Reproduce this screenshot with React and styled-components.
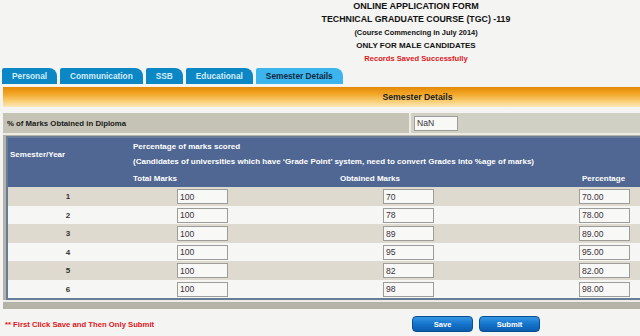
import styled, { createGlobalStyle } from "styled-components";

const sans = `"Liberation Sans", Arial, sans-serif`;

const GlobalStyle = createGlobalStyle`
  html, body {
    margin: 0;
    padding: 0;
    background: #f4f4f2;
    overflow: hidden;
  }
  body {
    font-family: ${sans};
  }
`;

const rows = [
  { sem: 1, total: "100", got: "70", pct: "70.00" },
  { sem: 2, total: "100", got: "78", pct: "78.00" },
  { sem: 3, total: "100", got: "89", pct: "89.00" },
  { sem: 4, total: "100", got: "95", pct: "95.00" },
  { sem: 5, total: "100", got: "82", pct: "82.00" },
  { sem: 6, total: "100", got: "98", pct: "98.00" },
];

const tabs = ["Personal", "Communication", "SSB", "Educational", "Semester Details"];

function App() {
  return (
    <Page>
      <GlobalStyle />
      <Header>
        <HeadLine $size={9}>ONLINE APPLICATION FORM</HeadLine>
        <HeadLine $size={8.8}>TECHNICAL GRADUATE COURSE (TGC) -119</HeadLine>
        <HeadLine $size={7.4}>(Course Commencing in July 2014)</HeadLine>
        <HeadLine $size={8}>ONLY FOR MALE CANDIDATES</HeadLine>
        <HeadLine $size={7.6} $red>
          Records Saved Successfully
        </HeadLine>
      </Header>

      <TabBar>
        {tabs.map((t) => (
          <Tab key={t} $active={t === "Semester Details"}>
            {t}
          </Tab>
        ))}
      </TabBar>

      <Banner>Semester Details</Banner>

      <Frame>
        <DiplomaRow>
          <LabelCell>% of Marks Obtained in Diploma</LabelCell>
          <ValueCell>
            <Field $w={44} readOnly defaultValue="NaN" />
          </ValueCell>
        </DiplomaRow>

        <TableArea>
          <MarksTable>
            <HeadTop>
              <HeadCell>Semester/Year</HeadCell>
              <HeadNote>
                <span>Percentage of marks scored</span>
                <span>
                  (Candidates of universities which have ‘Grade Point’ system,
                  need to convert Grades into %age of marks)
                </span>
              </HeadNote>
            </HeadTop>
            <HeadSub>
              <span />
              <HeadLabel>Total Marks</HeadLabel>
              <HeadLabel>Obtained Marks</HeadLabel>
              <HeadLabel>Percentage</HeadLabel>
            </HeadSub>
            {rows.map((r, i) => (
              <BodyRow key={r.sem} $alt={i % 2 === 1}>
                <SemCell>{r.sem}</SemCell>
                <InputCell $pad={49}>
                  <Field readOnly defaultValue={r.total} />
                </InputCell>
                <InputCell $pad={48}>
                  <Field readOnly defaultValue={r.got} />
                </InputCell>
                <InputCell $pad={2}>
                  <Field readOnly defaultValue={r.pct} />
                </InputCell>
              </BodyRow>
            ))}
          </MarksTable>
        </TableArea>

        <BottomBar />
      </Frame>

      <Footer>
        <Note>** First Click Save and Then Only Submit</Note>
        <ButtonGroup>
          <Button>Save</Button>
          <Button>Submit</Button>
        </ButtonGroup>
      </Footer>
    </Page>
  );
}

export default App;

const Page = styled.div`
  width: 832px;
  color: #111;
`;

const Header = styled.div`
  display: flex;
  flex-direction: column;
  align-items: center;
`;

const HeadLine = styled.div`
  font-size: ${(p) => p.$size}px;
  font-weight: bold;
  line-height: 13px;
  color: ${(p) => (p.$red ? "#e0141b" : "#111")};
`;

const TabBar = styled.div`
  display: flex;
  gap: 3px;
  margin-top: 3px;
  padding-left: 2px;
`;

const Tab = styled.div`
  height: 16px;
  padding: 0 10px;
  display: flex;
  align-items: center;
  font-size: 8.3px;
  font-weight: bold;
  border-radius: 2px 8px 0 0;
  background: ${(p) => (p.$active ? "#3cb5ee" : "#0b87c5")};
  color: ${(p) => (p.$active ? "#10283c" : "#d4ecf8")};
`;

const Banner = styled.div`
  margin: 3px 0 0 3px;
  height: 20px;
  display: flex;
  align-items: center;
  justify-content: center;
  font-size: 8.7px;
  font-weight: bold;
  color: #222;
  background: linear-gradient(#e48906 0%, #f2a627 35%, #f8cd72 70%, #fce8b8 100%);
`;

const Frame = styled.div`
  margin: 6px 0 0 3px;
  display: flex;
  flex-direction: column;
  gap: 2px;
  background: #ecebe4;
`;

const DiplomaRow = styled.div`
  display: grid;
  grid-template-columns: 406px 1fr;
  gap: 2px;
  height: 20px;
`;

const LabelCell = styled.div`
  display: flex;
  align-items: center;
  padding-left: 4px;
  background: #c5c3b5;
  font-size: 7.8px;
  font-weight: bold;
  color: #1a1a1a;
`;

const ValueCell = styled.div`
  display: flex;
  align-items: center;
  padding-left: 3px;
  background: #d1d0c4;
`;

const Field = styled.input`
  box-sizing: border-box;
  width: ${(p) => p.$w || 51}px;
  height: 15px;
  padding: 0 2px;
  border: 1px solid #9c9c98;
  background: #f8f8f6;
  font-family: ${sans};
  font-size: 8.6px;
  color: #3a3238;
  outline: none;
`;

const TableArea = styled.div`
  background: #b5b3a7;
  padding: 1px 0 0 3px;
`;

const MarksTable = styled.div`
  border: 2px solid #687d98;
  border-right: none;
`;

const HeadTop = styled.div`
  display: grid;
  grid-template-columns: 120px 1fr;
  height: 32px;
  background: #4f6792;
  color: #fff;
  font-size: 8px;
  font-weight: bold;
`;

const HeadCell = styled.div`
  display: flex;
  align-items: center;
  padding-left: 2px;
  padding-top: 1px;
`;

const HeadNote = styled.div`
  display: flex;
  flex-direction: column;
  justify-content: center;
  gap: 6px;
  padding-left: 5px;
`;

const HeadSub = styled.div`
  display: grid;
  grid-template-columns: 120px 207px 242px 1fr;
  height: 17px;
  align-items: center;
  background: #4f6792;
  color: #fff;
  font-size: 8px;
  font-weight: bold;
`;

const HeadLabel = styled.div`
  padding-left: 5px;
`;

const BodyRow = styled.div`
  display: grid;
  grid-template-columns: 120px 207px 242px 1fr;
  align-items: center;
  height: ${(p) => (p.$alt ? 18 : 19)}px;
  background: ${(p) => (p.$alt ? "#f6f6f4" : "#dedad0")};
`;

const SemCell = styled.div`
  text-align: center;
  font-size: 8px;
  font-weight: bold;
  color: #333;
`;

const InputCell = styled.div`
  display: flex;
  padding-left: ${(p) => p.$pad}px;
`;

const BottomBar = styled.div`
  height: 7px;
  background: #b5b3a7;
`;

const Footer = styled.div`
  display: grid;
  grid-template-columns: 412px auto;
  align-items: center;
  padding-top: 7px;
`;

const Note = styled.div`
  padding-left: 5px;
  font-size: 7.7px;
  font-weight: bold;
  color: #e0141b;
`;

const ButtonGroup = styled.div`
  display: flex;
  gap: 6px;
`;

const Button = styled.button`
  width: 61px;
  height: 16px;
  padding: 0;
  border: 1px solid #0b4f93;
  border-radius: 4px;
  background: linear-gradient(#3596e4 0%, #1574cc 50%, #0b5cae 100%);
  color: #fff;
  font-family: ${sans};
  font-size: 7.6px;
  font-weight: bold;
`;
